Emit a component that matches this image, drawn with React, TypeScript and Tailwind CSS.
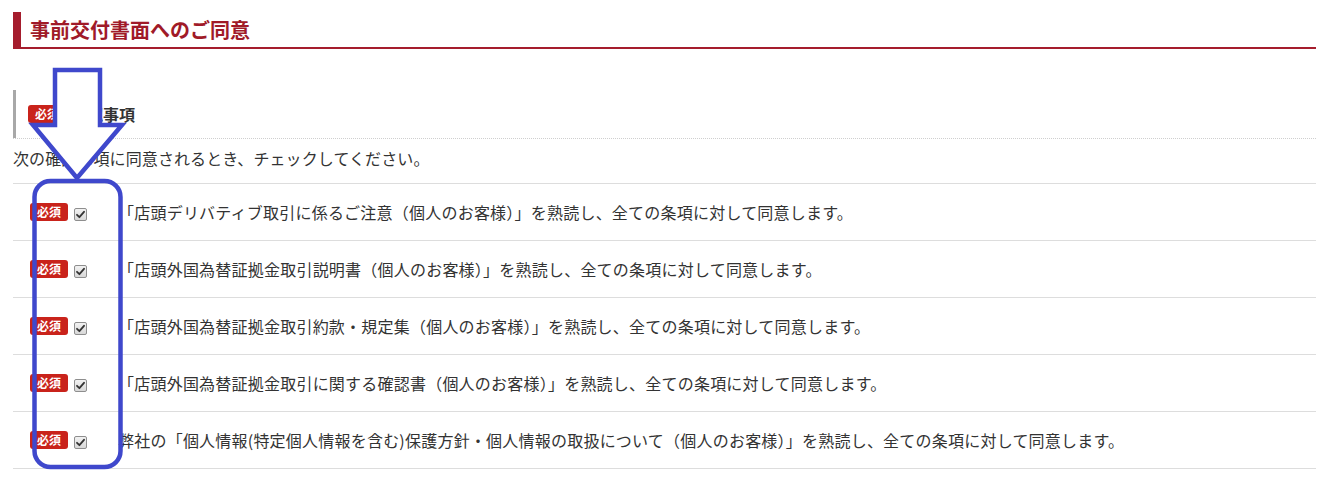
import React from 'react';

const items = [
  '「店頭デリバティブ取引に係るご注意（個人のお客様）」を熟読し、全ての条項に対して同意します。',
  '「店頭外国為替証拠金取引説明書（個人のお客様）」を熟読し、全ての条項に対して同意します。',
  '「店頭外国為替証拠金取引約款・規定集（個人のお客様）」を熟読し、全ての条項に対して同意します。',
  '「店頭外国為替証拠金取引に関する確認書（個人のお客様）」を熟読し、全ての条項に対して同意します。',
  '弊社の「個人情報(特定個人情報を含む)保護方針・個人情報の取扱について（個人のお客様）」を熟読し、全ての条項に対して同意します。',
];

const Badge = () => (
  <span className="inline-flex items-center justify-center w-[38px] h-[18px] rounded-[3px] bg-[#c9231b] text-white text-[12px] font-bold leading-none shrink-0">
    必須
  </span>
);

const CheckBox = () => (
  <span className="inline-flex items-center justify-center w-[13px] h-[13px] rounded-[2px] border border-[#8e8e8e] bg-gradient-to-b from-[#f2f2f2] to-[#d8d8d8] shrink-0">
    <svg width="9" height="9" viewBox="0 0 9 9">
      <path d="M1 4.8 L3.4 7.2 L8 1.8" fill="none" stroke="#333" strokeWidth="1.8" strokeLinecap="round" strokeLinejoin="round" />
    </svg>
  </span>
);

export default function App() {
  return (
    <div
      className="relative w-[1344px] h-[485px] bg-white overflow-hidden pl-[13px] pr-[28px] text-[#333]"
      style={{ fontFamily: '"Noto Sans CJK JP", "Noto Sans", sans-serif' }}
    >
      <div className="pt-[12px] border-b-2 border-[#a51d2d]">
        <div className="h-[35px] border-l-[8px] border-[#a51d2d] pl-[9px] flex items-center">
          <h2 className="text-[20px] font-bold text-[#a01a28] leading-none">事前交付書面へのご同意</h2>
        </div>
      </div>

      <div className="mt-[41px] h-[49px] border-b border-dotted border-[#cfcfcf]">
        <div className="h-[48px] border-l-[3px] border-[#a8a8a8] pl-[12px] flex items-center gap-[5px]">
          <Badge />
          <span className="text-[16px] font-bold text-[#333]">確認事項</span>
        </div>
      </div>

      <div className="h-[45px] border-b border-[#dddddd] pt-[7px]">
        <p className="text-[16px] leading-6 tracking-[0.1px]">次の確認事項に同意されるとき、チェックしてください。</p>
      </div>

      {items.map((text, i) => (
        <div key={i} className="h-[57px] border-b border-[#dddddd] flex items-center pl-[17px]">
          <Badge />
          <span className="ml-[6px]">
            <CheckBox />
          </span>
          <span className="ml-[31px] text-[16px] leading-6 tracking-[0.22px] whitespace-nowrap">{text}</span>
        </div>
      ))}

      {/* annotation overlay */}
      <svg className="absolute inset-0 pointer-events-none" width="1344" height="485">
        <path
          d="M55 70 L100 70 L100 125 L122 125 L77 178 L33 125 L55 125 Z"
          fill="white"
          stroke="#3f48cc"
          strokeWidth="4.5"
          strokeLinejoin="miter"
        />
        <rect x="34.5" y="181" width="86" height="286" rx="16" fill="none" stroke="#3f48cc" strokeWidth="4.5" />
      </svg>
    </div>
  );
}
